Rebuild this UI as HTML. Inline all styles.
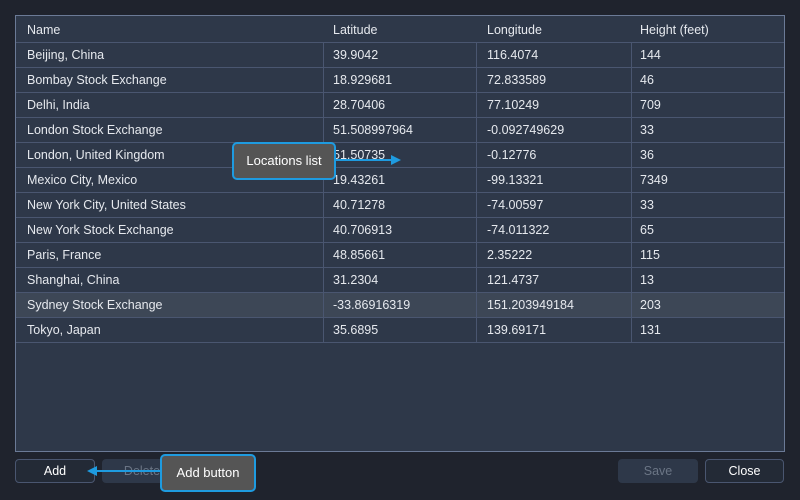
<!DOCTYPE html>
<html><head><style>
body{margin:0;width:800px;height:500px;background:#1f232d;font-family:"Liberation Sans",sans-serif;font-size:12.5px;color:#e6e9ee;position:relative;overflow:hidden}
.tbl{position:absolute;left:15px;top:15px;width:768px;height:435px;border:1px solid #6b7a96;background:#2e3849}
.row{position:absolute;left:0;width:768px;height:25px;border-bottom:1px solid #4a5670;box-sizing:border-box}
.row span{position:absolute;top:5px}
.c1{left:11px}.c2{left:317px}.c3{left:471px}.c4{left:624px}
.vl{position:absolute;top:27px;height:300px;width:1px;background:#4a5670}
.btn{position:absolute;top:459px;height:24px;border:1px solid #4a5670;border-radius:4px;box-sizing:border-box;text-align:center;line-height:22px;font-size:12.5px}
.tip{position:absolute;background:#555;border:2px solid #1e9be0;border-radius:5px;box-sizing:border-box;color:#fff;font-size:13px;text-align:center}
</style></head><body>
<div class="tbl">
<div class="row" style="top:0;height:27px"><span class="c1" style="top:7px">Name</span><span class="c2" style="top:7px">Latitude</span><span class="c3" style="top:7px">Longitude</span><span class="c4" style="top:7px">Height (feet)</span></div>
<div class="row" style="top:27px"><span class="c1">Beijing, China</span><span class="c2">39.9042</span><span class="c3">116.4074</span><span class="c4">144</span></div>
<div class="row" style="top:52px"><span class="c1">Bombay Stock Exchange</span><span class="c2">18.929681</span><span class="c3">72.833589</span><span class="c4">46</span></div>
<div class="row" style="top:77px"><span class="c1">Delhi, India</span><span class="c2">28.70406</span><span class="c3">77.10249</span><span class="c4">709</span></div>
<div class="row" style="top:102px"><span class="c1">London Stock Exchange</span><span class="c2">51.508997964</span><span class="c3">-0.092749629</span><span class="c4">33</span></div>
<div class="row" style="top:127px"><span class="c1">London, United Kingdom</span><span class="c2">51.50735</span><span class="c3">-0.12776</span><span class="c4">36</span></div>
<div class="row" style="top:152px"><span class="c1">Mexico City, Mexico</span><span class="c2">19.43261</span><span class="c3">-99.13321</span><span class="c4">7349</span></div>
<div class="row" style="top:177px"><span class="c1">New York City, United States</span><span class="c2">40.71278</span><span class="c3">-74.00597</span><span class="c4">33</span></div>
<div class="row" style="top:202px"><span class="c1">New York Stock Exchange</span><span class="c2">40.706913</span><span class="c3">-74.011322</span><span class="c4">65</span></div>
<div class="row" style="top:227px"><span class="c1">Paris, France</span><span class="c2">48.85661</span><span class="c3">2.35222</span><span class="c4">115</span></div>
<div class="row" style="top:252px"><span class="c1">Shanghai, China</span><span class="c2">31.2304</span><span class="c3">121.4737</span><span class="c4">13</span></div>
<div class="row" style="top:277px;background:#3d4756"><span class="c1">Sydney Stock Exchange</span><span class="c2">-33.86916319</span><span class="c3">151.203949184</span><span class="c4">203</span></div>
<div class="row" style="top:302px"><span class="c1">Tokyo, Japan</span><span class="c2">35.6895</span><span class="c3">139.69171</span><span class="c4">131</span></div>
<div class="vl" style="left:307px"></div><div class="vl" style="left:460px"></div><div class="vl" style="left:615px"></div>
</div>
<div class="btn" style="left:15px;width:80px;background:#232a36;color:#fff">Add</div>
<div class="btn" style="left:102px;width:80px;background:#2e3849;color:#6b7585;border-color:#2e3849">Delete</div>
<div class="btn" style="left:618px;width:80px;background:#2e3849;color:#6b7585;border-color:#2e3849">Save</div>
<div class="btn" style="left:705px;width:79px;background:#232a36;color:#fff">Close</div>
<svg style="position:absolute;left:0;top:0" width="800" height="500">
<line x1="334" y1="160" x2="392" y2="160" stroke="#1e9be0" stroke-width="2"/><polygon points="391,155 401,160 391,165" fill="#1e9be0"/>
<line x1="162" y1="471" x2="96" y2="471" stroke="#1e9be0" stroke-width="2"/><polygon points="97,466 87,471 97,476" fill="#1e9be0"/>
</svg>
<div class="tip" style="left:232px;top:142px;width:104px;height:38px;line-height:34px">Locations list</div>
<div class="tip" style="left:160px;top:454px;width:96px;height:38px;line-height:34px">Add button</div>
</body></html>
